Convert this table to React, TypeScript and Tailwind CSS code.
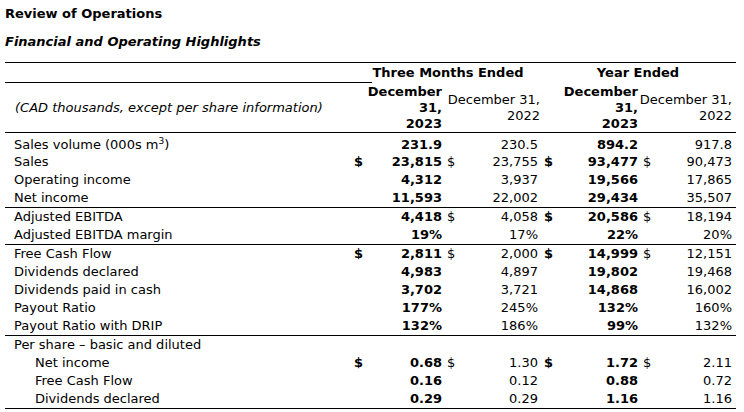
type Row = {
  label: React.ReactNode;
  indent?: boolean;
  dollarA?: boolean;
  dollars?: boolean;
  values?: [string, string, string, string];
  tall?: boolean;
};

const groups: Row[][] = [
  [
    {
      label: (
        <>
          Sales volume (000s m<sup className="text-[9px] -top-[5px]">3</sup>)
        </>
      ),
      values: ["231.9", "230.5", "894.2", "917.8"],
      tall: true,
    },
    { label: "Sales", dollarA: true, dollars: true, values: ["23,815", "23,755", "93,477", "90,473"] },
    { label: "Operating income", values: ["4,312", "3,937", "19,566", "17,865"] },
    { label: "Net income", values: ["11,593", "22,002", "29,434", "35,507"] },
  ],
  [
    { label: "Adjusted EBITDA", dollars: true, values: ["4,418", "4,058", "20,586", "18,194"] },
    { label: "Adjusted EBITDA margin", values: ["19%", "17%", "22%", "20%"] },
  ],
  [
    { label: "Free Cash Flow", dollarA: true, dollars: true, values: ["2,811", "2,000", "14,999", "12,151"] },
    { label: "Dividends declared", values: ["4,983", "4,897", "19,802", "19,468"] },
    { label: "Dividends paid in cash", values: ["3,702", "3,721", "14,868", "16,002"] },
    { label: "Payout Ratio", values: ["177%", "245%", "132%", "160%"] },
    { label: "Payout Ratio with DRIP", values: ["132%", "186%", "99%", "132%"] },
  ],
  [
    { label: "Per share – basic and diluted" },
    { label: "Net income", indent: true, dollarA: true, dollars: true, values: ["0.68", "1.30", "1.72", "2.11"] },
    { label: "Free Cash Flow", indent: true, values: ["0.16", "0.12", "0.88", "0.72"] },
    { label: "Dividends declared", indent: true, values: ["0.29", "0.29", "1.16", "1.16"] },
  ],
];

const cols = "grid grid-cols-[347px_20px_70px_16px_82px_22px_76px_16px_82px]";

function DataRow({ row }: { row: Row }) {
  const v = row.values;
  return (
    <div className={`${cols} items-center ${row.tall ? "h-[20px] pt-[3px]" : "h-[18px]"}`}>
      <div className={row.indent ? "pl-[30px]" : "pl-[9px]"}>{row.label}</div>
      <div className="pl-[2px] font-bold">{row.dollarA ? "$" : ""}</div>
      <div className="text-right font-bold">{v?.[0]}</div>
      <div className="pl-[5px]">{row.dollars ? "$" : ""}</div>
      <div className="text-right pr-[2px]">{v?.[1]}</div>
      <div className="pl-[4px] font-bold">{row.dollars ? "$" : ""}</div>
      <div className="text-right font-bold">{v?.[2]}</div>
      <div className="pl-[5px]">{row.dollars ? "$" : ""}</div>
      <div className="text-right pr-1">{v?.[3]}</div>
    </div>
  );
}

export default function App() {
  return (
    <div className="bg-white text-black w-[744px] h-[412px] px-[5px] pt-[6px] font-['DejaVu_Sans',Verdana,sans-serif] text-[13px] leading-[16px]">
      <h1 className="font-bold">Review of Operations</h1>
      <h2 className="font-bold italic mt-[12px]">Financial and Operating Highlights</h2>

      <div className="mt-[12px] w-[731px] border-t border-black">
        <div className={`${cols} h-[20px] items-center`}>
          <div className="col-span-2 h-full border-b border-black" />
          <div className="col-span-3 text-center font-bold pr-[16px]">Three Months Ended</div>
          <div className="col-span-4 text-center font-bold">Year Ended</div>
        </div>
        <div className={`${cols} h-[50px] items-center border-b border-black`}>
          <div className="pl-[10px] italic">(CAD thousands, except per share information)</div>
          <div className="col-span-2 text-right font-bold">
            December
            <br />
            31,
            <br />
            2023
          </div>
          <div className="col-span-2 text-right">
            December 31,
            <br />
            2022
          </div>
          <div className="col-span-2 text-right font-bold">
            December
            <br />
            31,
            <br />
            2023
          </div>
          <div className="col-span-2 text-right pr-1">
            December 31,
            <br />
            2022
          </div>
        </div>

        {groups.map((g, gi) => (
          <div key={gi} className={gi > 0 ? "border-t border-black" : ""}>
            {g.map((r, ri) => (
              <DataRow key={ri} row={r} />
            ))}
          </div>
        ))}
        <div className="border-t border-black" />
      </div>
    </div>
  );
}
